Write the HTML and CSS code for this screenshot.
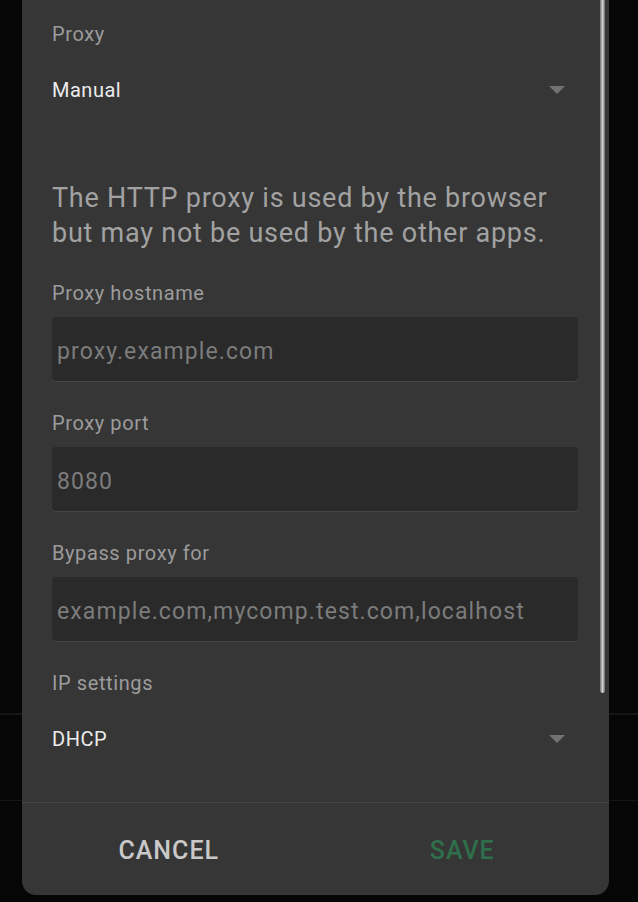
FILE: index.html
```html
<!DOCTYPE html>
<html>
<head>
    <title>Proxy settings</title>
    <link rel="stylesheet" href="styles.css">
</head>
<body>
    <div class="dialog">
        <div class="content">
            <div class="label first">Proxy</div>
            <div class="select">
                <span>Manual</span>
                <span class="arrow"></span>
            </div>

            <p class="note">The HTTP proxy is used by the browser but may not be used by the other apps.</p>

            <div class="label">Proxy hostname</div>
            <div class="field">proxy.example.com</div>

            <div class="label">Proxy port</div>
            <div class="field">8080</div>

            <div class="label">Bypass proxy for</div>
            <div class="field">example.com,mycomp.test.com,localhost</div>

            <div class="label">IP settings</div>
            <div class="select">
                <span>DHCP</span>
                <span class="arrow"></span>
            </div>
        </div>

        <div class="buttons">
            <button class="cancel">CANCEL</button>
            <button class="save">SAVE</button>
        </div>

        <div class="scrollbar"></div>
    </div>
</body>
</html>
```

FILE: styles.css
```css
body {
    margin: 0;
    height: 902px;
    overflow: hidden;
    font-family: Roboto, "Noto Sans", sans-serif;
    background:
        linear-gradient(#161616, #161616) 0 713px / 100% 2px no-repeat,
        linear-gradient(#141414, #141414) 0 800px / 100% 1px no-repeat,
        #060606;
}
.dialog {
    position: relative;
    margin-left: 22px;
    width: 587px;
    height: 895px;
    background-color: #363636;
    border-radius: 0 0 14px 14px;
    display: flex;
    flex-direction: column;
}
.content {
    flex: 1;
    padding: 0 31px 0 30px;
    border-bottom: 1px solid #444;
}
.label {
    font-size: 20px;
    line-height: 28px;
    letter-spacing: 0.6px;
    color: #9c9c9c;
    margin-top: 28px;
}
.label.first {
    margin-top: 20px;
}
.select {
    display: flex;
    justify-content: space-between;
    align-items: center;
    margin-top: 28px;
    height: 28px;
    font-size: 20px;
    letter-spacing: 0.5px;
    color: #ececec;
}
.arrow {
    width: 0;
    height: 0;
    margin-right: 13px;
    border-left: 8px solid transparent;
    border-right: 8px solid transparent;
    border-top: 8px solid #727272;
}
.note {
    margin: 77px 0 0;
    font-size: 27px;
    line-height: 35px;
    letter-spacing: 0.75px;
    color: #a2a2a2;
}
.field {
    margin-top: 10px;
    height: 64px;
    box-sizing: border-box;
    padding: 5px 0 0 5px;
    display: flex;
    align-items: center;
    background-color: #2a2a2a;
    border-radius: 4px;
    box-shadow: 0 1px 0 #464646;
    font-size: 23px;
    letter-spacing: 1.1px;
    color: #7c7c7c;
}
.buttons {
    display: flex;
    height: 92px;
}
.buttons button {
    flex: 1;
    background: none;
    border: none;
    padding: 2px 0 0;
    font-family: Roboto, "Noto Sans", sans-serif;
    font-size: 25px;
    font-weight: 500;
    letter-spacing: 1px;
}
.cancel {
    color: #c9c9c9;
}
.save {
    color: #2f6f4b;
}
.scrollbar {
    position: absolute;
    top: 0;
    right: 4px;
    width: 5px;
    height: 693px;
    border-radius: 0 0 3px 3px;
    background: linear-gradient(to right, #6d6d6d, #d0d0d0 50%, #6d6d6d);
}
```
